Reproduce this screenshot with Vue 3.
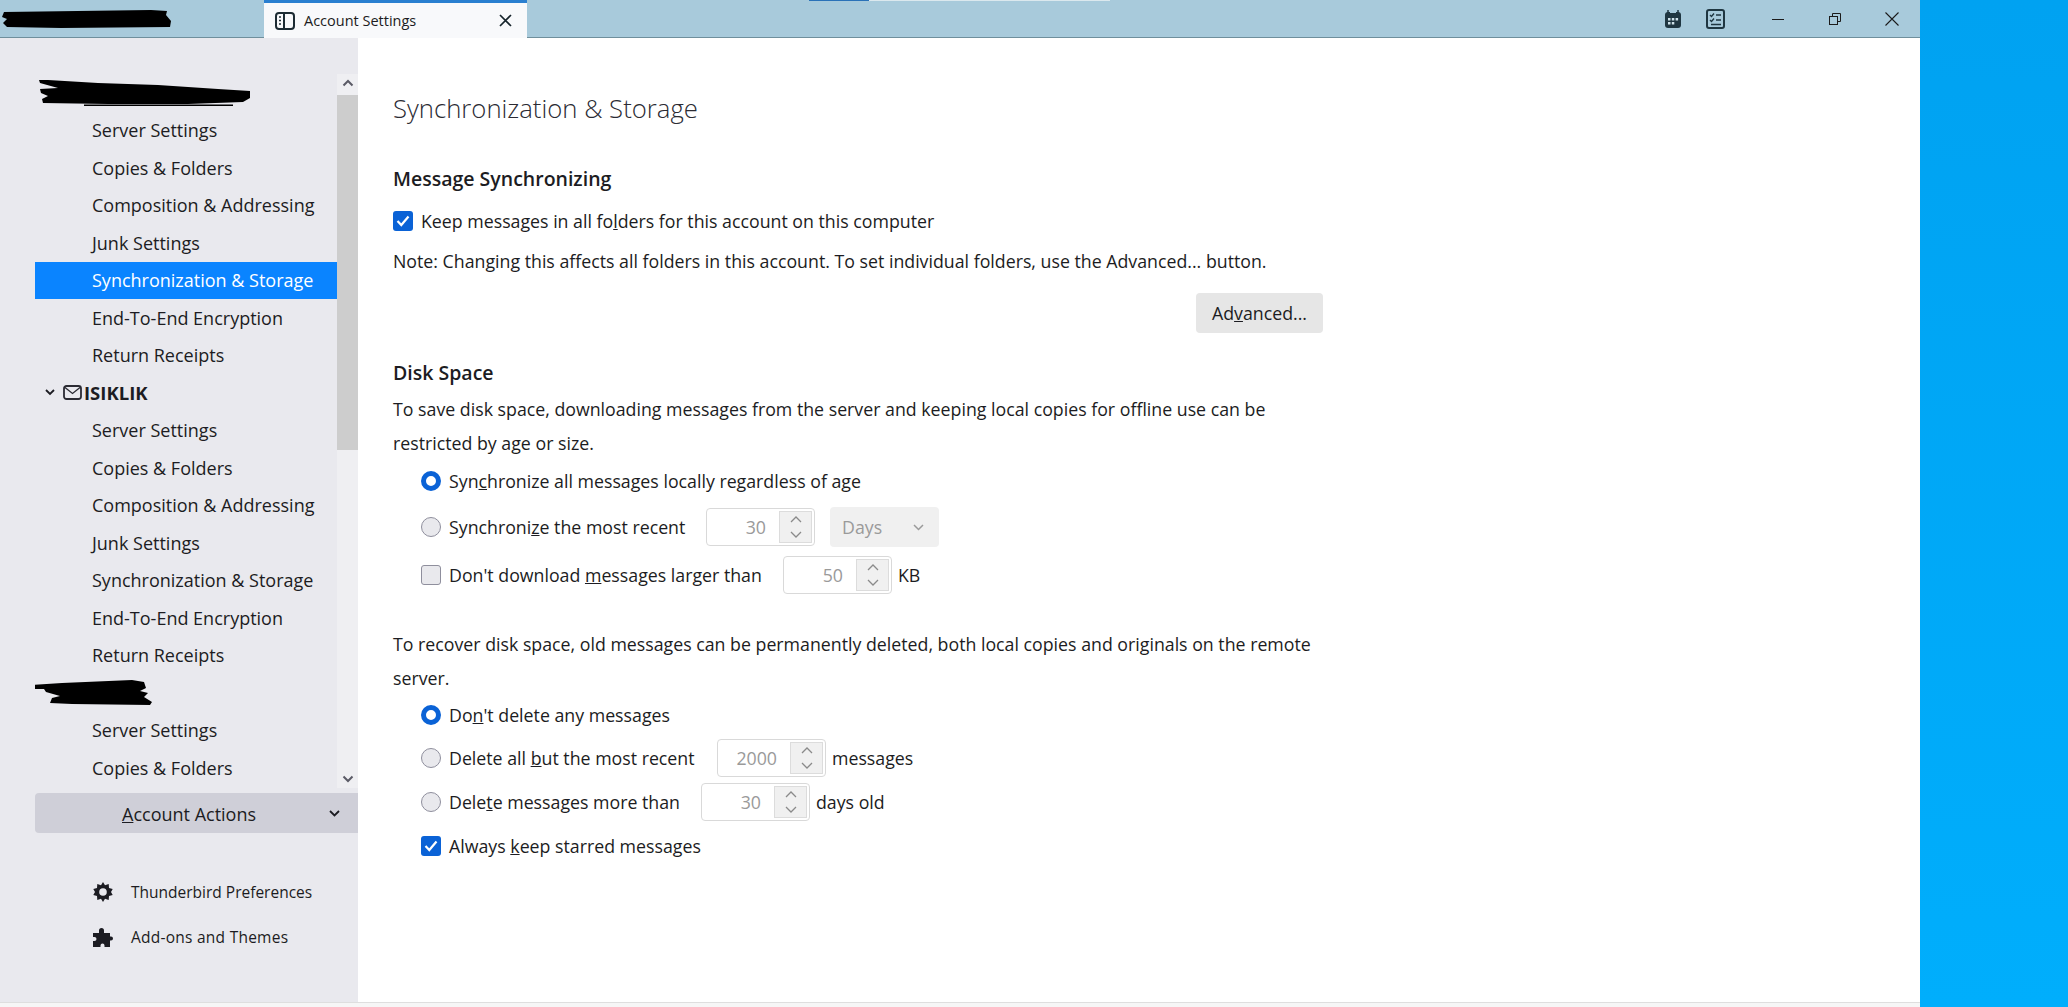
<template>
  <div class="screen">
    <div class="window">
      <header class="titlebar">
        <div class="loadbar"><i></i></div>
        <div class="brand">
          <svg class="scribble" width="170" height="20" viewBox="0 0 170 20"><path d="M3 3 L150 1 L166 2 L165 6 L170 12 L169 18 L60 19 L6 18 L2 14 L6 10 L1 8 Z" fill="#000" /></svg>
        </div>
        <div class="tab">
          <svg class="tab-icon" width="20" height="18" viewBox="0 0 20 18" fill="none" stroke="#1c2b33" stroke-width="2"><rect x="1" y="1" width="18" height="16" rx="3" /><path d="M9 1v16" /><path d="M4 5h2M4 8.500h2M4 12h2" stroke-width="1.500" /></svg>
          <span class="tab-title">Account Settings</span>
          <svg class="tab-close" width="13" height="13" viewBox="0 0 13 13" stroke="#16242b" stroke-width="1.700"><path d="M1 1l11 11M12 1L1 12" /></svg>
        </div>
        <div class="bar-tools">
          <svg width="18" height="20" viewBox="0 0 18 20"><path d="M4 1v4M14 1v4" stroke="#1f3641" stroke-width="1.500" /><rect x="1" y="3" width="16" height="16" rx="3" fill="#1f3641" /><rect x="6" y="2" width="6" height="2" fill="#a8cadb" /><path d="M4 9h2.500v2.500H4zM7.800 9h2.500v2.500H7.800zM11.600 9h2.500v2.500h-2.500zM4 13h2.500v2.500H4zM7.800 13h2.500v2.500H7.800z" fill="#cfe2ea" /></svg>
          <svg width="19" height="20" viewBox="0 0 19 20"><rect x="1" y="1" width="17" height="18" rx="2" fill="#a8cadb" stroke="#1f3641" stroke-width="2" /><path d="M4 6l1.500 1.500L8 4.500M4 11l1.500 1.500L8 9.500M10 6h5M10 11h5M5 15.500h10" fill="none" stroke="#1f3641" stroke-width="1.400" /></svg>
        </div>
        <div class="win-controls">
          <svg width="12" height="12" viewBox="0 0 12 12" stroke="#1b1b1b"><path d="M0 6.500h12" /></svg>
          <svg width="12" height="12" viewBox="0 0 12 12" fill="none" stroke="#1b1b1b"><rect x=".5" y="3.500" width="8" height="8" /><path d="M3.500 3.500v-3h8v8h-3" /></svg>
          <svg width="14" height="14" viewBox="0 0 14 14" stroke="#1b1b1b" stroke-width="1.100"><path d="M.5.500l13 13M13.500.500l-13 13" /></svg>
        </div>
      </header>

      <div class="body">
        <aside class="sidebar">
          <div class="tree-wrap">
            <div class="tree">
              <template v-for="(acc, a) in accounts" :key="a">
                <div class="row account">
                  <svg v-if="acc.blot" class="scribble" :width="acc.blot.w" :height="acc.blot.h" :viewBox="`0 0 ${acc.blot.w} ${acc.blot.h}`" :style="{ marginLeft: acc.blot.x + 'px' }">
                    <path :d="acc.blot.d" fill="#000" />
                  </svg>
                  <template v-else>
                    <svg class="twisty" width="10" height="7" viewBox="0 0 10 7" fill="none" stroke="#1c1c22" stroke-width="1.800"><path d="M1 1l4 4 4-4" /></svg>
                    <svg class="mail" width="19" height="15" viewBox="0 0 19 15" fill="none" stroke="#2b2b33" stroke-width="1.800"><rect x="1" y="1" width="17" height="13" rx="2.500" /><path d="M2 2.500l7.500 6 7.500-6" stroke-width="1.300" /></svg>
                    <b>ISIKLIK</b>
                  </template>
                </div>
                <div
                  v-for="item in acc.items"
                  :key="item"
                  class="row item"
                  :class="{ selected: a === 0 && item === 'Synchronization & Storage' }"
                >{{ item }}</div>
              </template>
            </div>
            <div class="scrollbar">
              <svg class="arrow" width="12" height="8" viewBox="0 0 12 8" fill="none" stroke="#5b5b66" stroke-width="2"><path d="M1.500 6.500L6 2l4.500 4.500" /></svg>
              <div class="thumb"></div>
              <svg class="arrow down" width="12" height="8" viewBox="0 0 12 8" fill="none" stroke="#5b5b66" stroke-width="2"><path d="M1.500 1.500L6 6l4.500-4.500" /></svg>
            </div>
          </div>

          <div class="actions">
            <span class="actions-label"><u>A</u>ccount Actions</span>
            <svg width="11" height="7" viewBox="0 0 11 7" fill="none" stroke="#1c1c22" stroke-width="1.800"><path d="M1 1l4.500 4.500L10 1" /></svg>
          </div>

          <div class="side-links">
            <div class="side-link">
              <svg width="20" height="20" viewBox="0 0 20 20"><path d="M10 0l2 3.200 3.700-1.100.3 3.900 3.700 1L18 10l1.700 3-3.700 1-.3 3.900-3.700-1.100L10 20l-2-3.200-3.700 1.100-.3-3.900-3.700-1L2 10 .3 7l3.700-1 .3-3.900L8 3.200z" fill="#1c1c22" /><circle cx="10" cy="10" r="3.800" fill="#e9e9ee" /></svg>
              <span>Thunderbird Preferences</span>
            </div>
            <div class="side-link">
              <svg width="20" height="20" viewBox="0 0 20 20"><path d="M0 6h6V3.500a2.500 2.500 0 0 1 5 0V6h6v3.500h1a2 2 0 0 1 0 4h-1V20h-5.500v-1.500a2 2 0 0 0-4 0V20H0v-6h1.500a2 2 0 0 0 0-4H0z" fill="#1c1c22" /></svg>
              <span class="addons">Add-ons and Themes</span>
            </div>
          </div>
        </aside>

        <main class="content">
          <h1>Synchronization &amp; Storage</h1>

          <section class="sync">
            <h2>Message Synchronizing</h2>
            <div class="line keep">
              <span class="check on"><svg width="14" height="12" viewBox="0 0 14 12" fill="none" stroke="#fff" stroke-width="2.200"><path d="M1.500 6l3.800 4L12.500 1.500" /></svg></span>
              <span>Keep messages in all fo<u>l</u>ders for this account on this computer</span>
            </div>
            <p class="note">Note: Changing this affects all folders in this account. To set individual folders, use the Advanced... button.</p>
            <div class="adv-row">
              <button class="adv">Ad<u>v</u>anced...</button>
            </div>
          </section>

          <section class="disk">
            <h2>Disk Space</h2>
            <p class="para">To save disk space, downloading messages from the server and keeping local copies for offline use can be restricted by age or size.</p>
            <div class="opts first-opts">
              <div class="opt h46">
                <span class="radio on"></span>
                <span>Syn<u>c</u>hronize all messages locally regardless of age</span>
              </div>
              <div class="opt h46">
                <span class="radio"></span>
                <span class="lab w-a">Synchroni<u>z</u>e the most recent</span>
                <span class="num"><span class="val">30</span><span class="spin"><svg viewBox="0 0 14 9"><path d="M2 7l5-5 5 5" /></svg><svg viewBox="0 0 14 9"><path d="M2 2l5 5 5-5" /></svg></span></span>
                <span class="select">Days<svg width="11" height="7" viewBox="0 0 11 7" fill="none" stroke="#9a9a9a" stroke-width="1.500"><path d="M1 1l4.500 4.500L10 1" /></svg></span>
              </div>
              <div class="opt h50">
                <span class="box"></span>
                <span class="lab w-b">Don't download <u>m</u>essages larger than</span>
                <span class="num"><span class="val">50</span><span class="spin"><svg viewBox="0 0 14 9"><path d="M2 7l5-5 5 5" /></svg><svg viewBox="0 0 14 9"><path d="M2 2l5 5 5-5" /></svg></span></span>
                <span class="unit">KB</span>
              </div>
            </div>

            <p class="para recover">To recover disk space, old messages can be permanently deleted, both local copies and originals on the remote server.</p>
            <div class="opts">
              <div class="opt h43">
                <span class="radio on"></span>
                <span>Do<u>n</u>'t delete any messages</span>
              </div>
              <div class="opt h44">
                <span class="radio"></span>
                <span class="lab w-c">Delete all <u>b</u>ut the most recent</span>
                <span class="num"><span class="val">2000</span><span class="spin"><svg viewBox="0 0 14 9"><path d="M2 7l5-5 5 5" /></svg><svg viewBox="0 0 14 9"><path d="M2 2l5 5 5-5" /></svg></span></span>
                <span class="unit">messages</span>
              </div>
              <div class="opt h43">
                <span class="radio"></span>
                <span class="lab w-d">Dele<u>t</u>e messages more than</span>
                <span class="num"><span class="val">30</span><span class="spin"><svg viewBox="0 0 14 9"><path d="M2 7l5-5 5 5" /></svg><svg viewBox="0 0 14 9"><path d="M2 2l5 5 5-5" /></svg></span></span>
                <span class="unit">days old</span>
              </div>
              <div class="opt h46">
                <span class="check on"><svg width="14" height="12" viewBox="0 0 14 12" fill="none" stroke="#fff" stroke-width="2.200"><path d="M1.500 6l3.800 4L12.500 1.500" /></svg></span>
                <span>Always <u>k</u>eep starred messages</span>
              </div>
            </div>
          </section>
        </main>
      </div>
      <div class="statusline"></div>
    </div>
    <div class="desktop"></div>
  </div>
</template>

<script setup>
const items = [
  'Server Settings',
  'Copies & Folders',
  'Composition & Addressing',
  'Junk Settings',
  'Synchronization & Storage',
  'End-To-End Encryption',
  'Return Receipts'
]

const accounts = [
  {
    blot: { x: 3, w: 213, h: 26, d: 'M1 0 L10 0 L60 3 L120 5 L180 9 L212 11 L212 18 L205 22 L150 24 L70 24 L5 23 L4 19 L10 16 L3 13 L2 9 L20 8 L2 3 Z M46 24.500 L195 24.500 L195 26 L46 26 Z' },
    items
  },
  { items },
  {
    blot: { x: -3, w: 120, h: 25, d: 'M0 5 L30 3 L100 0 L112 2 L114 8 L108 11 L116 13 L112 17 L120 22 L118 25 L40 24 L18 23 L20 18 L28 16 L14 12 L12 9 L2 9 Z' },
    items: items.slice(0, 2)
  }
]
</script>

<style>
html, body { margin: 0; overflow: hidden; background: #fff; }
</style>

<style scoped>
.screen {
  display: flex;
  width: 2068px;
  height: 1007px;
  font-family: "Open Sans", "Liberation Sans", sans-serif;
  color: #1c1c22;
  overflow: hidden;
}
.window {
  width: 1920px;
  display: flex;
  flex-direction: column;
}
.desktop {
  flex: 1;
  background: linear-gradient(#00a2f1, #00aefc);
}

.titlebar {
  position: relative;
  height: 37px;
  flex: none;
  display: flex;
  align-items: center;
  background: #a8cadb;
  border-bottom: 1px solid #6f8f9c;
}
.loadbar {
  position: absolute;
  left: 809px;
  top: 0;
  width: 301px;
  height: 1px;
  background: #dbe8ee;
}
.loadbar i {
  display: block;
  width: 60px;
  height: 1px;
  background: #2a72b8;
}
.brand {
  width: 264px;
  padding-left: 1px;
  box-sizing: border-box;
  display: flex;
}
.scribble { display: block; flex: none; }
.tab {
  width: 263px;
  height: 38px;
  margin-bottom: -1px;
  box-sizing: border-box;
  border-top: 3px solid #2a7fd0;
  background: #f8f9fb;
  display: flex;
  align-items: center;
  padding: 0 15px 0 11px;
  font-size: 14.500px;
}
.tab-title { margin-left: 9px; flex: 1; }
.bar-tools {
  margin-left: 1137px;
  display: flex;
  align-items: center;
  gap: 24px;
}
.win-controls {
  margin-left: 47px;
  display: flex;
  align-items: center;
  gap: 44.500px;
}

.body {
  flex: 1;
  display: flex;
  min-height: 0;
}
.sidebar {
  width: 358px;
  flex: none;
  background: #e9e9ee;
  padding-top: 36px;
  box-sizing: border-box;
  font-size: 18px;
}
.tree-wrap {
  display: flex;
  height: 714px;
  margin-left: 35px;
}
.tree {
  flex: 1;
  overflow: hidden;
}
.row {
  height: 37.500px;
  display: flex;
  align-items: center;
  white-space: nowrap;
}
.item { padding-left: 57px; }
.item.selected { background: #0a84ff; color: #fff; }
.account b { font-weight: 700; font-size: 18.500px; }
.twisty { margin-left: 10px; }
.mail { margin: 0 2px 0 8px; }
.scrollbar {
  width: 21px;
  background: #efeff2;
  position: relative;
  display: flex;
  flex-direction: column;
  align-items: center;
}
.arrow { margin-top: 5px; }
.arrow.down { margin-top: auto; margin-bottom: 5px; }
.thumb {
  position: absolute;
  left: 0;
  right: 0;
  top: 21px;
  height: 355px;
  background: #cdcdcd;
}
.actions {
  margin: 5px 0 0 35px;
  height: 40px;
  background: #cfcfd8;
  border-radius: 4px 0 0 4px;
  display: flex;
  align-items: center;
  padding: 1px 18px 0 87px;
  box-sizing: border-box;
}
.actions-label { flex: 1; }
.side-links {
  margin-top: 49px;
  padding-left: 93px;
  display: flex;
  flex-direction: column;
  gap: 25px;
  font-size: 15.500px;
}
.side-link {
  display: flex;
  align-items: center;
  gap: 18px;
  height: 20px;
}
.addons { letter-spacing: .25px; }

.content {
  flex: 1;
  background: #fff;
  padding: 0 0 0 35px;
  font-size: 17.750px;
}
h1 {
  margin: 53px 0 0;
  height: 36px;
  line-height: 36px;
  font-size: 25.700px;
  font-weight: 300;
  color: #2b2b33;
}
h2 {
  margin: 0;
  font-size: 19.500px;
  font-weight: 600;
  line-height: 28px;
}
.sync { margin-top: 38px; }
.line {
  display: flex;
  align-items: center;
  margin-top: 14px;
  height: 28px;
}
.check {
  width: 20px;
  height: 20px;
  flex: none;
  box-sizing: border-box;
  border-radius: 3px;
  background: #0a62d6;
  display: flex;
  align-items: center;
  justify-content: center;
  margin-right: 8px;
}
.note {
  margin: 12px 0 0;
  line-height: 28px;
}
.adv-row {
  width: 930px;
  display: flex;
  justify-content: flex-end;
  margin-top: 18px;
}
.adv {
  width: 127px;
  height: 40px;
  border: 0;
  border-radius: 4px;
  background: #e6e6e6;
  font: inherit;
  color: inherit;
  padding: 0;
}
.disk { margin-top: 26px; }
.para {
  margin: 5px 0 0;
  width: 930px;
  line-height: 34px;
}
.opts { padding-left: 28px; }
.first-opts { margin-top: -2px; }
.recover { margin-top: 27px; }
.opt {
  display: flex;
  align-items: center;
}
.h43 { height: 43px; }
.h44 { height: 44px; }
.h46 { height: 46px; }
.h50 { height: 50px; }
.recover + .opts { margin-top: -2px; }
.radio {
  width: 20px;
  height: 20px;
  flex: none;
  box-sizing: border-box;
  border-radius: 50%;
  border: 1px solid #8f8f9d;
  background: #e9e9ed;
  margin-right: 8px;
}
.radio.on {
  border: 5px solid #0a62d6;
  background: #fff;
}
.box {
  width: 20px;
  height: 20px;
  flex: none;
  box-sizing: border-box;
  border-radius: 3px;
  border: 1px solid #8f8f9d;
  background: #e9e9ed;
  margin-right: 8px;
}
.lab { flex: none; }
.w-a { width: 257px; }
.w-b { width: 334px; }
.w-c { width: 268px; }
.w-d { width: 252px; }
.num {
  width: 109px;
  height: 38px;
  flex: none;
  box-sizing: border-box;
  border: 1px solid #d9d9d9;
  border-radius: 4px;
  display: flex;
  align-items: center;
  justify-content: flex-end;
  padding-right: 2px;
  color: #9a9a9a;
}
.val { margin-right: 13px; }
.spin {
  width: 33px;
  height: 32px;
  box-sizing: border-box;
  border: 1px solid #dcdcdc;
  background: #f0f0f0;
  display: flex;
  flex-direction: column;
}
.spin svg {
  flex: 1;
  min-height: 0;
  width: 14px;
  margin: 0 auto;
  fill: none;
  stroke: #8a8a8a;
  stroke-width: 1.300;
}
.unit { margin-left: 6px; }
.select {
  width: 109px;
  height: 40px;
  margin-left: 15px;
  box-sizing: border-box;
  background: #f0f0f0;
  border-radius: 4px;
  color: #9a9a9a;
  display: flex;
  align-items: center;
  justify-content: space-between;
  padding: 0 15px 0 12px;
}
.statusline {
  height: 4px;
  flex: none;
  background: #f6f6f6;
  border-top: 1px solid #dedede;
}
</style>
